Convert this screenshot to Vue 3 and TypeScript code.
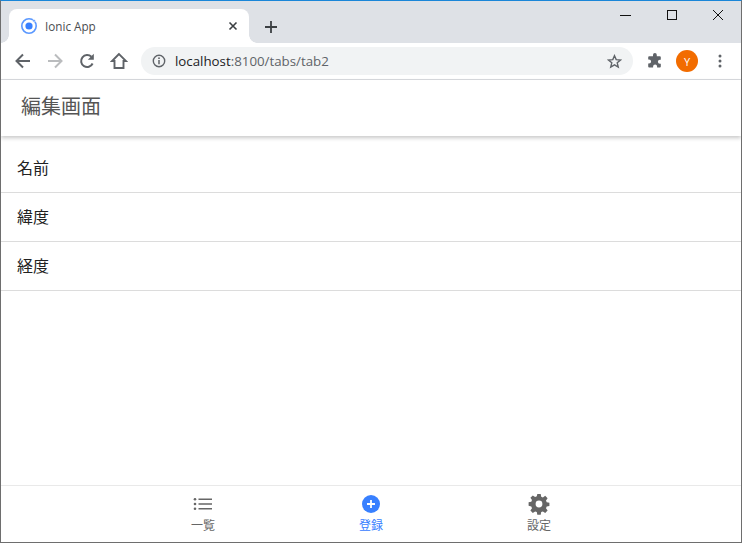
<template>
  <div class="window">
    <div class="tabstrip">
      <div class="tab">
        <svg class="favicon" width="18" height="18" viewBox="0 0 18 18">
          <circle cx="9" cy="9" r="7.2" fill="none" stroke="#5a98ff" stroke-width="1.6" />
          <circle cx="9" cy="9" r="3.6" fill="#3880ff" />
          <circle cx="14" cy="3.8" r="1.4" fill="#5a98ff" stroke="#fff" stroke-width=".6" />
        </svg>
        <span class="tab-title">Ionic App</span>
        <svg class="tab-close" width="10" height="10" viewBox="0 0 10 10">
          <path d="M1.500 1.500l7 7M8.500 1.500l-7 7" stroke="#3c4043" stroke-width="1.600" />
        </svg>
      </div>
      <svg class="new-tab" width="14" height="14" viewBox="0 0 14 14">
        <path d="M7 1v12M1 7h12" stroke="#3c4043" stroke-width="1.800" />
      </svg>
      <div class="win-controls">
        <svg width="46" height="30" viewBox="0 0 46 30"><path d="M17 14.500h11" stroke="#111" /></svg>
        <svg width="46" height="30" viewBox="0 0 46 30"><rect x="18.500" y="9.500" width="9" height="9" fill="none" stroke="#111" /></svg>
        <svg width="46" height="30" viewBox="0 0 46 30"><path d="M18 9l10 10M28 9L18 19" stroke="#111" /></svg>
      </div>
    </div>

    <div class="toolbar">
      <svg class="nav" width="18" height="18" viewBox="0 0 18 18">
        <path d="M16 9H3M9 2.500L2.500 9 9 15.500" fill="none" stroke="#5f6368" stroke-width="2" />
      </svg>
      <svg class="nav" width="18" height="18" viewBox="0 0 18 18">
        <path d="M2 9h13M9 2.500L15.500 9 9 15.500" fill="none" stroke="#babcbe" stroke-width="2" />
      </svg>
      <svg class="nav" width="18" height="18" viewBox="0 0 18 18">
        <path d="M14.600 11.500A6 6 0 1 1 13.400 4.800" fill="none" stroke="#5f6368" stroke-width="2" />
        <path d="M15.800 1.800v6h-6z" fill="#5f6368" />
      </svg>
      <svg class="nav" width="18" height="18" viewBox="0 0 18 18">
        <path d="M9 2L2 9h2.500v7h9V9H16z" fill="none" stroke="#5f6368" stroke-width="1.900" />
      </svg>
      <div class="omnibox">
        <svg width="14" height="14" viewBox="0 0 14 14">
          <circle cx="7" cy="7" r="5.700" fill="none" stroke="#5f6368" stroke-width="1.400" />
          <path d="M7 6v4.200" stroke="#5f6368" stroke-width="1.500" />
          <circle cx="7" cy="4.200" r=".9" fill="#5f6368" />
        </svg>
        <span class="url"><span class="host">localhost</span>:8100/tabs/tab2</span>
        <svg class="star" width="15" height="15" viewBox="0 0 16 16">
          <path d="M8 1.800l1.800 4.200 4.600.4-3.500 3 1.100 4.500L8 11.500l-4 2.400 1.100-4.500-3.500-3 4.600-.4z" fill="none" stroke="#5f6368" stroke-width="1.500" />
        </svg>
      </div>
      <svg class="puzzle" width="16" height="16" viewBox="0 0 16 16">
        <path d="M6 1.900a1.900 1.900 0 0 1 3.800 0V3.300h3a1 1 0 0 1 1 1v2.500h-.9a2 2 0 0 0 0 4h.9v2.700a1 1 0 0 1-1 1h-2.700v-.9a2 2 0 0 0-4 0v.9H2.200a1 1 0 0 1-1-1v-2.900h.8a2.100 2.100 0 0 0 0-4.200h-.8V4.300a1 1 0 0 1 1-1H6z" fill="#5f6368" />
      </svg>
      <span class="avatar">Y</span>
      <svg class="kebab" width="4" height="14" viewBox="0 0 4 14">
        <circle cx="2" cy="2" r="1.500" fill="#5f6368" />
        <circle cx="2" cy="7" r="1.500" fill="#5f6368" />
        <circle cx="2" cy="12" r="1.500" fill="#5f6368" />
      </svg>
    </div>

    <div class="app">
      <header class="app-header">編集画面</header>
      <main class="content">
        <div v-for="field of fields" :key="field" class="item">{{ field }}</div>
      </main>
      <footer class="tabbar">
        <div v-for="tab of tabs" :key="tab.label" class="tabbar-item" :class="{ active: tab.active }">
          <svg v-if="tab.icon === 'list'" width="22" height="22" viewBox="0 0 22 22">
            <circle cx="3" cy="6.300" r="1.300" fill="#666" />
            <circle cx="3" cy="11" r="1.300" fill="#666" />
            <circle cx="3" cy="15.700" r="1.300" fill="#666" />
            <path d="M6.500 6.300H20M6.500 11H20M6.500 15.700H20" stroke="#666" stroke-width="1.400" />
          </svg>
          <svg v-else-if="tab.icon === 'add'" width="22" height="22" viewBox="0 0 22 22">
            <circle cx="11" cy="11" r="9" fill="#3880ff" />
            <path d="M11 7v8M7 11h8" stroke="#fff" stroke-width="1.800" />
          </svg>
          <svg v-else width="22" height="22" viewBox="0 0 22 22">
            <path fill="#666" fill-rule="evenodd" d="M9.300 1h3.400l.5 2.700 1.700.7 2.300-1.600 2.400 2.400-1.600 2.300.7 1.700 2.700.5v3.400l-2.700.5-.7 1.700 1.600 2.300-2.400 2.400-2.300-1.600-1.700.7-.5 2.700H9.300l-.5-2.700-1.700-.7-2.300 1.600-2.400-2.400 1.600-2.300-.7-1.700L.6 12.700V9.300l2.700-.5.700-1.700-1.600-2.300 2.400-2.400 2.300 1.600 1.700-.7zM11 7.600a3.400 3.400 0 1 0 0 6.800 3.400 3.400 0 0 0 0-6.800z" />
          </svg>
          <span class="tabbar-label">{{ tab.label }}</span>
        </div>
      </footer>
    </div>
  </div>
</template>

<script setup lang="ts">
const fields = ["名前", "緯度", "経度"];

const tabs = [
  { label: "一覧", icon: "list", active: false },
  { label: "登録", icon: "add", active: true },
  { label: "設定", icon: "settings", active: false },
];
</script>

<style scoped>
.window {
  width: 742px;
  height: 543px;
  box-sizing: border-box;
  display: flex;
  flex-direction: column;
  background: #fff;
  border: 1px solid #6e6e6e;
  border-top-color: #1a86d8;
  font-family: "Noto Sans CJK JP", "Noto Sans", sans-serif;
  overflow: hidden;
}

.tabstrip {
  height: 42px;
  flex: none;
  display: flex;
  align-items: flex-end;
  background: #dee1e6;
  padding-left: 8px;
}

.tab {
  position: relative;
  width: 240px;
  height: 34px;
  box-sizing: border-box;
  display: flex;
  align-items: center;
  padding: 0 11px;
  background: #fff;
  border-radius: 8px 8px 0 0;
}

.tab::before,
.tab::after {
  content: "";
  position: absolute;
  bottom: 0;
  width: 8px;
  height: 8px;
  background: radial-gradient(circle at 0 0, #dee1e6 7.5px, #fff 8px);
}

.tab::before {
  left: -8px;
}

.tab::after {
  right: -8px;
  transform: scaleX(-1);
}

.tab-title {
  margin-left: 7px;
  font-family: "Open Sans", sans-serif;
  font-size: 11.7px;
  color: #4a4d50;
}

.tab-close {
  margin-left: auto;
}

.new-tab {
  align-self: center;
  margin: 9px 0 0 15px;
}

.win-controls {
  align-self: flex-start;
  margin-left: auto;
  display: flex;
}

.toolbar {
  height: 37px;
  flex: none;
  box-sizing: border-box;
  display: flex;
  align-items: center;
  padding-left: 13px;
  background: #fff;
  border-bottom: 1px solid #dadce0;
}

.nav {
  margin-right: 14px;
}

.nav:nth-of-type(4) {
  margin-right: 13px;
}

.omnibox {
  width: 492px;
  height: 28px;
  box-sizing: border-box;
  display: flex;
  align-items: center;
  padding: 0 11px 0 11px;
  background: #f1f3f4;
  border-radius: 14px;
}

.url {
  margin-left: 9px;
  font-family: "Open Sans", sans-serif;
  font-size: 13.3px;
  color: #5f6368;
}

.host {
  color: #202124;
}

.star {
  margin-left: auto;
}

.puzzle {
  margin-left: 14px;
}

.avatar {
  width: 22px;
  height: 22px;
  margin-left: 13px;
  display: flex;
  align-items: center;
  justify-content: center;
  background: #f26c00;
  border-radius: 50%;
  color: #fff;
  font-family: "Open Sans", sans-serif;
  font-size: 11px;
}

.kebab {
  margin-left: 20px;
}

.app {
  flex: 1;
  min-height: 0;
  display: flex;
  flex-direction: column;
}

.app-header {
  position: relative;
  height: 56px;
  flex: none;
  box-sizing: border-box;
  padding-left: 20px;
  line-height: 52px;
  font-size: 20px;
  color: #555;
  box-shadow: 0 2px 4px rgba(0, 0, 0, 0.22);
}

.content {
  flex: 1;
  padding-top: 8px;
}

.item {
  height: 49px;
  box-sizing: border-box;
  padding-left: 16px;
  line-height: 46px;
  font-size: 16px;
  color: #222;
  border-bottom: 1px solid #dcdcdc;
}

.tabbar {
  height: 57px;
  flex: none;
  box-sizing: border-box;
  display: flex;
  justify-content: center;
  border-top: 1px solid #e9e9e9;
}

.tabbar-item {
  width: 168px;
  display: flex;
  flex-direction: column;
  align-items: center;
  padding-top: 7px;
  color: #666;
}

.tabbar-item.active {
  color: #3880ff;
}

.tabbar-label {
  margin-top: 1px;
  font-size: 12px;
  line-height: 18px;
}
</style>

<style>
html,
body {
  margin: 0;
  background: #fff;
}
</style>
